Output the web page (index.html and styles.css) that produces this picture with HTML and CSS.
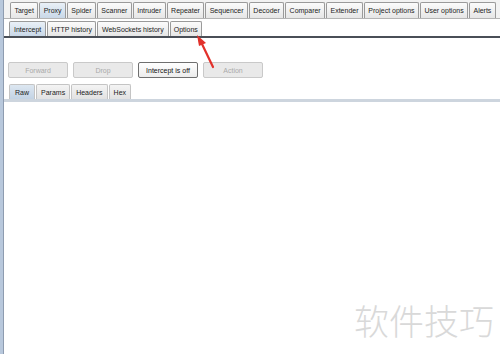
FILE: index.html
```html
<!DOCTYPE html>
<html lang="en">

<head>
    <meta charset="UTF-8">
    <meta name="viewport" content="width=device-width, initial-scale=1.0">
    <title>Burp Suite - Proxy</title>
    <link rel="stylesheet" href="styles.css">
</head>

<body>
    <div class="window">
        <div class="edge"></div>
        <div class="main">
            <nav class="tabs top-tabs">
                <span class="tab">Target</span>
                <span class="tab active">Proxy</span>
                <span class="tab">Spider</span>
                <span class="tab">Scanner</span>
                <span class="tab">Intruder</span>
                <span class="tab">Repeater</span>
                <span class="tab">Sequencer</span>
                <span class="tab">Decoder</span>
                <span class="tab">Comparer</span>
                <span class="tab">Extender</span>
                <span class="tab">Project options</span>
                <span class="tab">User options</span>
                <span class="tab">Alerts</span>
            </nav>
            <nav class="tabs sub-tabs">
                <span class="tab active">Intercept</span>
                <span class="tab">HTTP history</span>
                <span class="tab">WebSockets history</span>
                <span class="tab">Options</span>
            </nav>

            <div class="toolbar">
                <button class="btn" disabled>Forward</button>
                <button class="btn" disabled>Drop</button>
                <button class="btn on">Intercept is off</button>
                <button class="btn" disabled>Action</button>
            </div>

            <nav class="tabs view-tabs">
                <span class="tab active">Raw</span>
                <span class="tab">Params</span>
                <span class="tab">Headers</span>
                <span class="tab">Hex</span>
            </nav>
            <div class="editor"></div>
        </div>
    </div>

    <!-- annotation arrow pointing at the Options tab -->
    <svg class="arrow" width="40" height="40" viewBox="0 0 40 40">
        <path d="M23 35 L12 12" stroke="#e2312b" stroke-width="2.2" stroke-linecap="round" fill="none"/>
        <polygon points="7,3 16,11 9,14" fill="#e2312b"/>
    </svg>

    <div class="watermark">软件技巧</div>
</body>

</html>
```

FILE: styles.css
```css
body {
    margin: 0;
    padding: 0;
    background-color: #fff;
    font-family: "Liberation Sans", Arial, sans-serif;
    font-size: 7px;
    color: #222;
    overflow: hidden;
}

.window {
    display: flex;
    height: 354px;
}

.edge {
    width: 3px;
    background-color: #b8c8dc;
    border-right: 1px solid #8e9cb0;
}

.main {
    flex: 1;
    display: flex;
    flex-direction: column;
    min-width: 0;
}

.tabs {
    display: flex;
    align-items: flex-end;
}

.tab {
    display: flex;
    align-items: center;
    padding: 0 4px;
    border: 1px solid #9a9a9a;
    border-bottom: none;
    border-radius: 2px 2px 0 0;
    background: linear-gradient(#fbfbfb, #e6e6e6);
    margin-right: 1px;
    white-space: nowrap;
}

.tab.active {
    background: linear-gradient(#e9f0f7, #c9d8e8);
}

.top-tabs {
    height: 18px;
    padding-left: 6px;
    background-color: #f2f2f2;
    border-bottom: 1px solid #b4b4b4;
}

.top-tabs .tab {
    height: 15px;
    padding: 0 3.4px;
}

.sub-tabs {
    height: 17px;
    padding-left: 5px;
    border-bottom: 2px solid #4a4f57;
}

.sub-tabs .tab {
    height: 14px;
}

.sub-tabs .tab:nth-child(2),
.sub-tabs .tab:nth-child(4) {
    padding: 0 3px;
}

.toolbar {
    display: flex;
    gap: 5px;
    padding: 24px 0 0 4px;
    height: 16px;
}

.btn {
    width: 60px;
    height: 16px;
    padding: 0;
    font-family: inherit;
    font-size: 7px;
    border-radius: 2px;
    border: 1px solid #c9c9c9;
    background-color: #e9e9e9;
    color: #aaa;
}

.btn.on {
    border-color: #6f6f6f;
    background: linear-gradient(#ffffff, #ececec);
    color: #111;
}

.view-tabs {
    margin-top: 5px;
    height: 16px;
    padding-left: 5px;
    border-bottom: 3px solid #cdd5de;
}

.view-tabs .tab {
    height: 14px;
    border-color: #c4c4c4;
    background: linear-gradient(#f4f4f4, #e2e2e2);
}

.view-tabs .tab.active {
    padding: 0 5px;
    background: linear-gradient(#dde7f1, #c3d3e4);
}

.editor {
    flex: 1;
    background-color: #fff;
}

.arrow {
    position: absolute;
    left: 190px;
    top: 32px;
}

.watermark {
    position: absolute;
    left: 354px;
    top: 294px;
    font-family: "Noto Sans CJK SC", sans-serif;
    font-size: 35px;
    font-weight: 300;
    color: #d9d9d9;
}
```
